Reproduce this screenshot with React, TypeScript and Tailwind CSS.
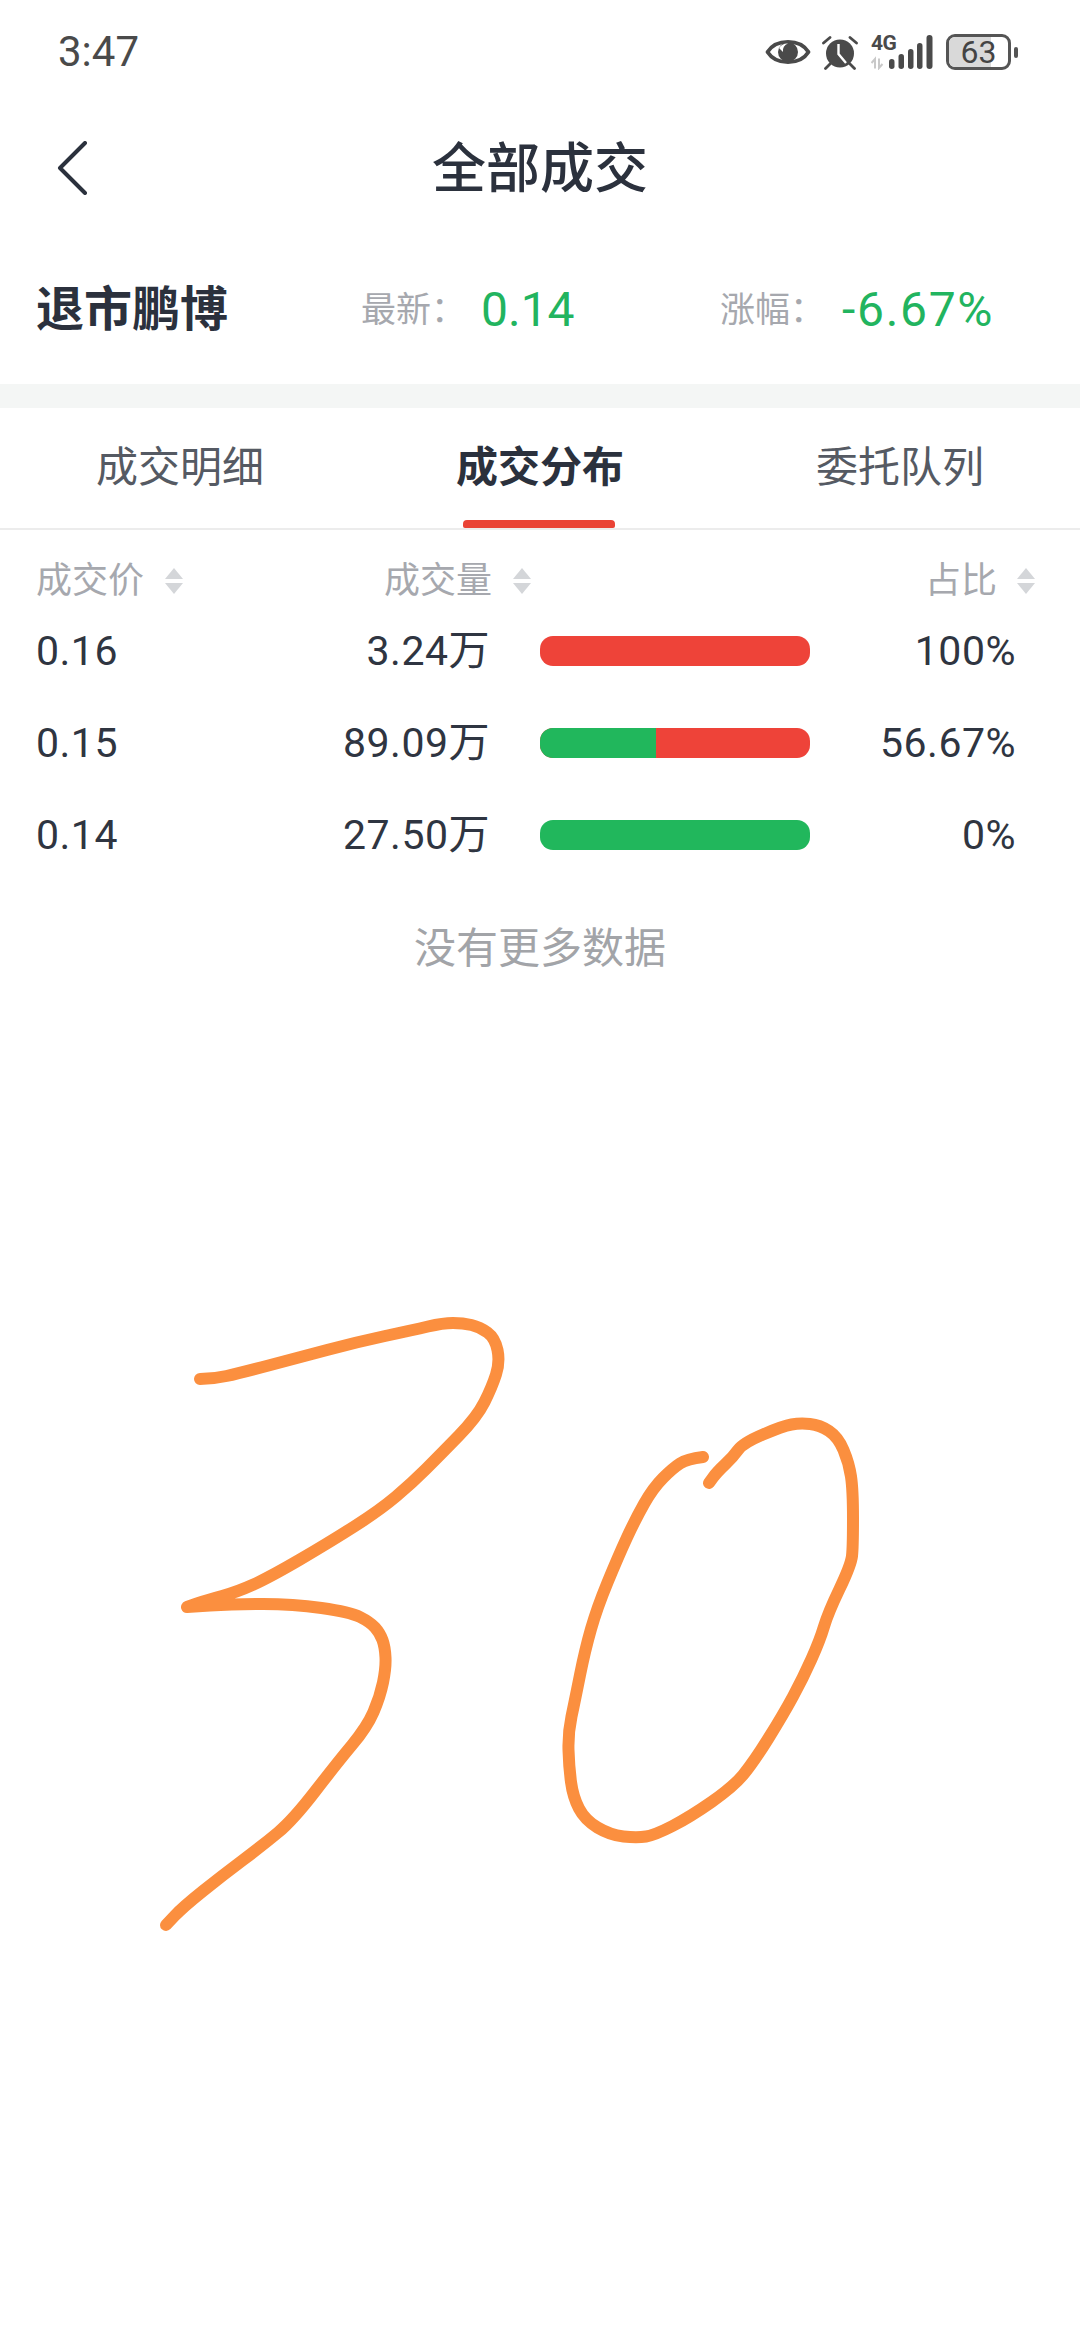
const sans = "font-['Roboto','Noto_Sans_CJK_SC',sans-serif]";

function Sorter() {
  return (
    <svg width="18" height="26" viewBox="0 0 18 26" className="shrink-0">
      <path d="M9 0 L18 11 H0 Z" fill="#d4d6d9" />
      <path d="M0 15 H18 L9 26 Z" fill="#d4d6d9" />
    </svg>
  );
}

function Eye() {
  return (
    <svg width="46" height="30" viewBox="0 0 46 30">
      <path d="M2.5 15 C11 1.5 35 1.5 43.5 15 C35 28.5 11 28.5 2.5 15 Z" fill="none" stroke="#4a4a4a" strokeWidth="3.8" strokeLinejoin="round" />
      <circle cx="23" cy="15" r="10" fill="#4a4a4a" />
      <path d="M14 11 A10 10 0 0 1 23 6.5 A7.5 7.5 0 0 0 18 15 Z" fill="#ffffff" />
    </svg>
  );
}

function Alarm() {
  return (
    <svg width="36" height="35" viewBox="0 0 36 35">
      <circle cx="18" cy="18.5" r="14" fill="#4a4a4a" />
      <path d="M16.5 9 V19 L24 28" fill="none" stroke="#ffffff" strokeWidth="2.4" />
      <path d="M1.5 8 L8 2.5 M34.5 8 L28 2.5 M8 29 L3.5 33.5 M28 29 L32.5 33.5" stroke="#4a4a4a" strokeWidth="2.8" strokeLinecap="round" />
    </svg>
  );
}

function Signal() {
  return (
    <div className="relative h-[35px] w-[62px]">
      <span className="absolute left-0 top-0 text-[21px] font-bold leading-[17px] tracking-[-0.5px] text-[#4a4a4a]">4G</span>
      <svg width="62" height="35" viewBox="0 0 62 35" className="absolute left-0 top-0">
        <path d="M4 33.5 V24 L0.5 28 M8 23.5 V33 L11.5 29" fill="none" stroke="#c9c9c9" strokeWidth="2" />
        <rect x="18" y="24" width="5.5" height="10" rx="2.7" fill="#4a4a4a" />
        <rect x="27.5" y="19" width="5.5" height="15" rx="2.7" fill="#4a4a4a" />
        <rect x="37" y="14" width="5.5" height="20" rx="2.7" fill="#4a4a4a" />
        <rect x="46" y="8" width="5.5" height="26" rx="2.7" fill="#4a4a4a" />
        <rect x="55.5" y="0" width="6" height="34" rx="3" fill="#4a4a4a" />
      </svg>
    </div>
  );
}

function Battery() {
  return (
    <div className="flex items-center gap-[3px]">
      <div className="relative flex h-[36px] w-[65px] items-center justify-center overflow-hidden rounded-[9px] border-[3px] border-[#555555] bg-white">
        <div className="absolute inset-y-0 left-0 w-[42px] bg-[#d9d9d9]" />
        <span className="relative text-[32px] leading-none text-[#444444]">63</span>
      </div>
      <div className="h-[11px] w-[4px] rounded-full bg-[#555555]" />
    </div>
  );
}

function smooth(pts: number[][]) {
  let d = `M${pts[0][0]} ${pts[0][1]}`;
  for (let i = 1; i < pts.length - 1; i++) {
    const mx = (pts[i][0] + pts[i + 1][0]) / 2;
    const my = (pts[i][1] + pts[i + 1][1]) / 2;
    d += ` Q${pts[i][0]} ${pts[i][1]} ${mx} ${my}`;
  }
  const last = pts[pts.length - 1];
  return `${d} L${last[0]} ${last[1]}`;
}

const three = [[200,1379],[213,1379],[240,1373],[297,1358],[357,1342],[413,1330],[443,1323],[463,1323],[480,1327],[495,1338],[500,1362],[492,1387],[477,1417],[440,1455],[412,1483],[380,1510],[330,1542],[270,1577],[237,1592],[207,1600],[187,1607],[187,1607],[233,1604],[293,1604],[350,1612],[370,1622],[380,1633],[385,1647],[386,1668],[380,1697],[367,1727],[337,1763],[293,1820],[263,1845],[223,1875],[183,1907],[166,1925]];
const zero = [[703,1457],[687,1459],[673,1468],[653,1488],[635,1520],[618,1557],[597,1608],[585,1650],[575,1700],[568,1733],[569,1767],[573,1797],[585,1820],[610,1835],[637,1838],[655,1835],[690,1817],[733,1787],[753,1763],[783,1715],[803,1678],[820,1640],[828,1613],[851,1565],[853,1547],[853,1490],[849,1463],[838,1437],[820,1425],[800,1423],[783,1426],[743,1443],[733,1457],[717,1472],[709,1483]];

const rows = [
  { price: "0.16", vol: "3.24万", green: 0, pct: "100%" },
  { price: "0.15", vol: "89.09万", green: 43, pct: "56.67%" },
  { price: "0.14", vol: "27.50万", green: 100, pct: "0%" },
];

export default function App() {
  return (
    <div className={`relative h-[2340px] w-[1080px] overflow-hidden bg-white ${sans}`}>
      {/* status bar */}
      <div className="flex h-[104px] items-center justify-between pl-[58px] pr-[62px] text-[#4a4a4a]">
        <span className="text-[42px] leading-none">3:47</span>
        <div className="flex items-center">
          <Eye />
          <div className="ml-[11px]"><Alarm /></div>
          <div className="ml-[13px]"><Signal /></div>
          <div className="ml-[13px]"><Battery /></div>
        </div>
      </div>

      {/* title */}
      <div className="relative flex h-[128px] items-center justify-center pt-[3px]">
        <svg width="32" height="54" viewBox="0 0 32 54" className="absolute left-[56px] top-[37px]">
          <path d="M29 2 L4 27 L29 52" fill="none" stroke="#2b313d" strokeWidth="4" strokeLinecap="round" strokeLinejoin="round" />
        </svg>
        <h1 className="text-[54px] font-medium leading-none text-[#2b313d]">全部成交</h1>
      </div>

      {/* quote */}
      <div className="flex h-[152px] items-center pl-[36px] pt-[4px]">
        <span className="w-[325px] text-[48px] font-bold leading-none text-[#2b313d]">退市鹏博</span>
        <span className="w-[120px] text-[35px] leading-none text-[#a6a8ae]">最新：</span>
        <span className="w-[239px] text-[48px] leading-none text-[#22b45f]">0.14</span>
        <span className="w-[122px] text-[35px] leading-none text-[#a6a8ae]">涨幅：</span>
        <span className="text-[48px] leading-none tracking-[1.7px] text-[#22b45f]">-6.67%</span>
      </div>

      <div className="h-[24px] bg-[#f4f6f5]" />

      {/* tabs */}
      <div className="grid h-[122px] grid-cols-3 border-b-[2px] border-[#ececec]">
        <div className="flex justify-center pt-[39px] text-[42px] leading-[42px] text-[#555a63]">成交明细</div>
        <div className="relative flex justify-center pt-[39px] text-[42px] font-bold leading-[42px] text-[#2b313d]">
          成交分布
          <div className="absolute bottom-0 left-[103px] h-[8px] w-[152px] rounded-t-[4px] rounded-b-[2px] bg-[#ea4335]" />
        </div>
        <div className="flex justify-center pt-[39px] text-[42px] leading-[42px] text-[#555a63]">委托队列</div>
      </div>

      {/* table head */}
      <div className="flex h-[75px] items-center pl-[36px] pt-[26px] text-[36px] leading-none text-[#a6a8ae]">
        <div className="flex w-[147px] items-center justify-between">
          <span>成交价</span>
          <Sorter />
        </div>
        <div className="ml-[201px] flex w-[147px] items-center justify-between">
          <span>成交量</span>
          <Sorter />
        </div>
        <div className="ml-[394px] flex w-[110px] items-center justify-between">
          <span>占比</span>
          <Sorter />
        </div>
      </div>

      {/* rows */}
      <div className="grid grid-cols-[150px_304px_321px_205px] pl-[36px] text-[41px] leading-none tracking-[0.5px] text-[#2f3541]">
        {rows.map((r) => (
          <div key={r.price} className="col-span-4 grid h-[92px] grid-cols-subgrid items-center">
            <span>{r.price}</span>
            <span className="text-right">{r.vol}</span>
            <div className="ml-[50px] flex h-[30px] w-[270px] overflow-hidden rounded-[13px] bg-[#ee4339]">
              {r.green > 0 && <div className="h-full bg-[#21b75c]" style={{ width: `${r.green}%` }} />}
            </div>
            <span className="text-right">{r.pct}</span>
          </div>
        ))}
      </div>

      <div className="mt-[47px] text-center text-[42px] leading-none text-[#a2a4a8]">没有更多数据</div>

      {/* handwritten overlay */}
      <svg width="1080" height="2340" viewBox="0 0 1080 2340" className="pointer-events-none absolute left-0 top-0" fill="none" stroke="#fb8f3f" strokeWidth="12" strokeLinecap="round" strokeLinejoin="round">
        <path d={smooth(three)} />
        <path d={smooth(zero)} />
      </svg>
    </div>
  );
}
